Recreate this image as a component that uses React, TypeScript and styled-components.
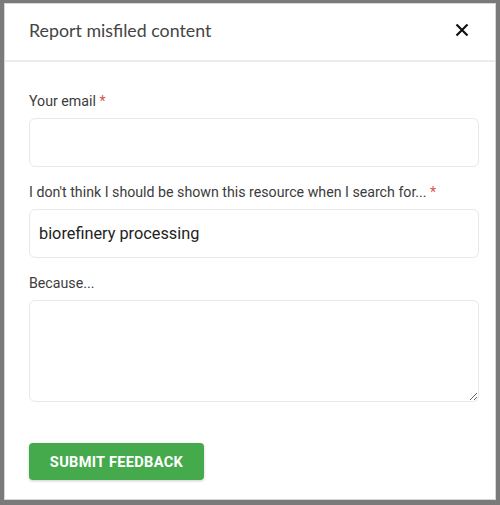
import React from 'react'
import styled, { createGlobalStyle } from 'styled-components'

const GlobalStyle = createGlobalStyle`
    html, body {
        margin: 0;
        padding: 0;
        background: #7a7a7a;
    }
    * {
        box-sizing: border-box;
    }
`;

const Frame = styled.div`
    width: 500px;
    height: 505px;
    padding: 3px 4px 5px 4px;
`;

const Dialog = styled.div`
    width: 492px;
    height: 497px;
    background: #fff;
    border: 1px solid #d6d6d6;
    display: flex;
    flex-direction: column;
`;

const Header = styled.div`
    height: 58px;
    display: flex;
    align-items: center;
    justify-content: space-between;
    padding: 0 26px 4px 24px;
    border-bottom: 2px solid #ececec;
`;

const Title = styled.h1`
    margin: 0;
    font-family: Lato, "Liberation Sans", sans-serif;
    font-weight: 400;
    font-size: 17.8px;
    color: #444;
`;

const CloseButton = styled.button`
    border: 0;
    background: none;
    padding: 0;
    width: 14px;
    height: 14px;
    display: flex;
    cursor: pointer;
`;

const Body = styled.form`
    padding: 29px 16px 0 24px;
    display: flex;
    flex-direction: column;
`;

const Field = styled.div`
    display: flex;
    flex-direction: column;
    margin-bottom: 15px;
`;

const Label = styled.label`
    font-family: Roboto, "Liberation Sans", sans-serif;
    font-size: 14.2px;
    line-height: 20px;
    color: #3c3c3c;
    margin-bottom: 7px;
`;

const Required = styled.span`
    color: #d9534f;
`;

const Input = styled.input`
    height: 49px;
    flex: none;
    width: 100%;
    border: 1.5px solid #e8e8e8;
    border-radius: 6px;
    padding: 0 9px;
    font-family: Roboto, "Liberation Sans", sans-serif;
    font-size: 16.3px;
    color: #222;
    outline: none;
`;

const TextArea = styled.textarea`
    height: 102px;
    flex: none;
    width: 100%;
    border: 1.5px solid #e8e8e8;
    border-radius: 6px;
    padding: 9px;
    font-family: Roboto, "Liberation Sans", sans-serif;
    font-size: 16px;
    color: #222;
    outline: none;
`;

const SubmitButton = styled.button`
    margin-top: 26px;
    align-self: flex-start;
    width: 175px;
    height: 37px;
    border: 0;
    border-radius: 4px;
    background: #45aa4b;
    color: #fff;
    font-family: Roboto, "Liberation Sans", sans-serif;
    font-weight: 700;
    font-size: 14.6px;
    letter-spacing: 0.3px;
    box-shadow: 0 1px 3px rgba(0, 0, 0, 0.2);
    cursor: pointer;
`;

function CloseIcon() {
    return (
        <svg width="14" height="14" viewBox="0 0 14 14">
            <path d="M1.5 1.5 L12.5 12.5 M12.5 1.5 L1.5 12.5" stroke="#111" strokeWidth="2.2" />
        </svg>
    );
}

export default function App() {
    return (
        <>
            <GlobalStyle />
            <Frame>
                <Dialog>
                    <Header>
                        <Title>Report misfiled content</Title>
                        <CloseButton type="button" aria-label="Close">
                            <CloseIcon />
                        </CloseButton>
                    </Header>
                    <Body onSubmit={(e) => e.preventDefault()}>
                        <Field>
                            <Label>Your email <Required>*</Required></Label>
                            <Input type="email" />
                        </Field>
                        <Field>
                            <Label>I don't think I should be shown this resource when I search for... <Required>*</Required></Label>
                            <Input type="text" defaultValue="biorefinery processing" />
                        </Field>
                        <Field>
                            <Label>Because...</Label>
                            <TextArea />
                        </Field>
                        <SubmitButton type="submit">SUBMIT FEEDBACK</SubmitButton>
                    </Body>
                </Dialog>
            </Frame>
        </>
    );
}
